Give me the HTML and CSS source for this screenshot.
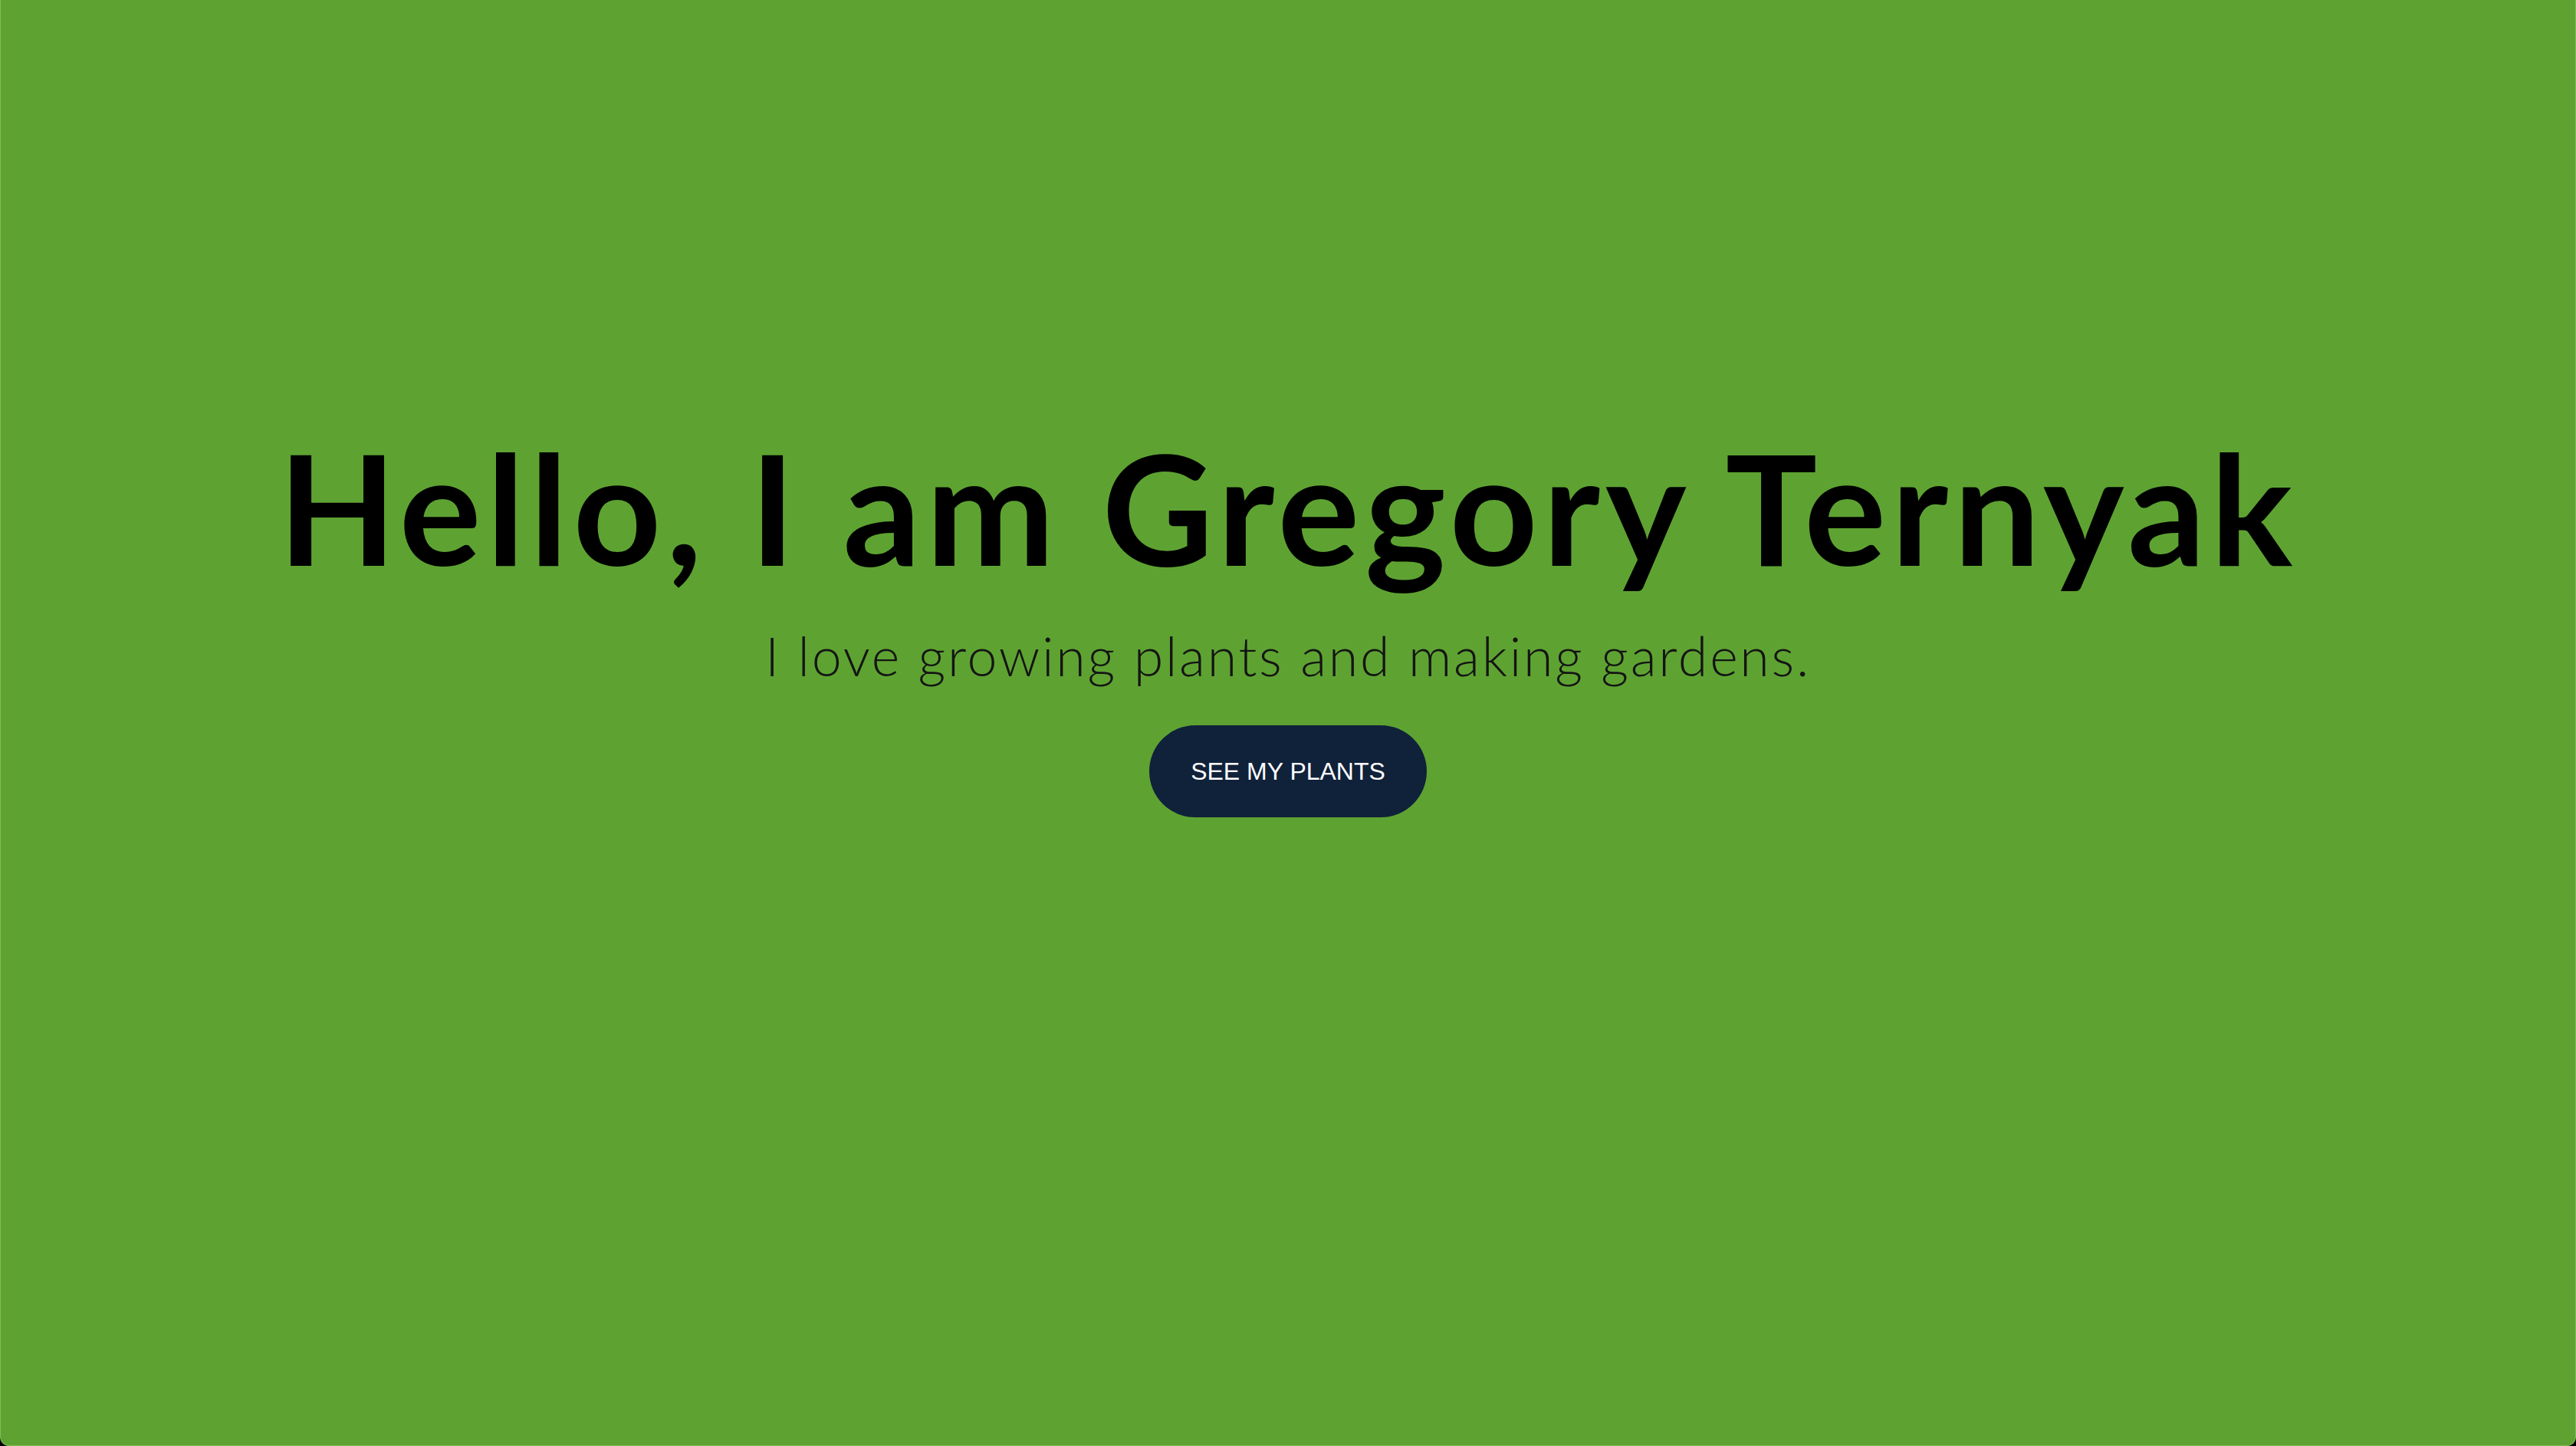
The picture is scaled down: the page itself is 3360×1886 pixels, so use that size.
FILE: index.html
```html
<!DOCTYPE html>
<html lang="en">
<head>
<meta charset="utf-8">
<title>Gregory Ternyak</title>
<link rel="stylesheet" href="styles.css">
</head>
<body>
<main class="page">
  <section class="hero">
    <h1 class="hero-title">Hello, I am Gregory Ternyak</h1>
    <p class="hero-subtitle">I love growing plants and making gardens.</p>
    <a class="hero-button" href="#plants">SEE MY PLANTS</a>
  </section>
</main>
</body>
</html>
```
FILE: styles.css
```css
html, body {
  margin: 0;
  padding: 0;
  background: #000;
  height: 100%;
}
.page {
  box-sizing: border-box;
  height: 100vh;
  background: #5ea332;
  border: 1px solid #7fbc5a;
  border-top: none;
  border-radius: 0 0 12px 12px;
  overflow: hidden;
}
.hero {
  display: flex;
  flex-direction: column;
  align-items: center;
  padding-top: 541px;
}
.hero-title {
  margin: 0;
  font-family: Lato, "Open Sans", sans-serif;
  font-weight: 700;
  font-size: 200px;
  line-height: 1.2;
  letter-spacing: 6.8px;
  color: #000;
  white-space: nowrap;
}
.hero-subtitle {
  margin: 32px 0 0;
  font-family: Lato, "Open Sans", sans-serif;
  font-weight: 300;
  font-size: 70px;
  line-height: 1.2;
  letter-spacing: 2.7px;
  color: #141414;
  white-space: nowrap;
}
.hero-button {
  margin-top: 49px;
  display: inline-flex;
  align-items: center;
  justify-content: center;
  box-sizing: border-box;
  height: 120px;
  padding: 0 54px;
  border-radius: 60px;
  background: #10213a;
  color: #fff;
  font-family: "Liberation Sans", Arial, sans-serif;
  font-size: 32px;
  text-decoration: none;
}
```
